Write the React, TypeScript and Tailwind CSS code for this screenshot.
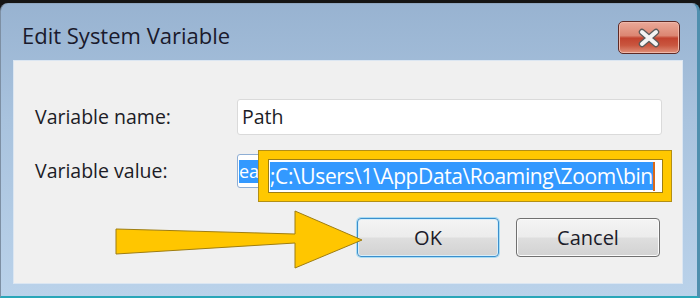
import React from "react";

const btnBg =
  "bg-[linear-gradient(to_bottom,#f4f4f4_0%,#ececec_48%,#dedede_52%,#d2d2d2_100%)]";

export default function App() {
  return (
    <div className="relative w-[700px] h-[298px] overflow-hidden bg-[#151515] pt-[3px] font-['Open_Sans',sans-serif]">
      <div className="h-full flex flex-col rounded-t-[8px] border-t border-l border-r-[3px] border-b-[2px] border-t-[#8fa6bf] border-l-[#7d8fa3] border-r-[#4f8fae] border-b-[#2aa6b8] bg-[linear-gradient(to_bottom,#98b3d1_0%,#a9c3de_40%,#bad2ea_100%)] pl-[12px] pr-[14px] pb-[12px]">
        {/* title bar */}
        <div className="h-[56px] flex items-start justify-between pt-[16px]">
          <div className="pl-[9px] text-[22px] leading-[30px] text-[#1a1a2c]">
            Edit System Variable
          </div>
          <div className="mt-[1px] mr-[3px] w-[62px] h-[33px] rounded-[5px] border border-[#5e2a26] bg-[linear-gradient(to_bottom,#eaa999_0%,#dc8672_44%,#c2432f_52%,#c9563f_75%,#df917b_100%)] shadow-[inset_0_0_0_1px_#f0b8aa] flex items-center justify-center">
            <svg width="24" height="20" viewBox="0 0 24 20">
              <path d="M5 4 L19 16 M19 4 L5 16" stroke="#5a5a5a" strokeWidth="6.5" strokeLinecap="round" />
              <path d="M5 4 L19 16 M19 4 L5 16" stroke="#f4f4f4" strokeWidth="4" strokeLinecap="round" />
            </svg>
          </div>
        </div>
        {/* client */}
        <div className="flex-1 bg-[#f0f0f0] border border-[#dbe6f2] pl-[21px] pt-[38px] text-[#1c1c26]">
          <div className="flex items-center h-[36px]">
            <div className="w-[202px] text-[19.5px] leading-[26px]">Variable name:</div>
            <div className="w-[425px] h-[36px] bg-white border border-[#dadada] rounded-[3px] flex items-center pl-[4px] text-[19.5px] leading-[26px]">
              Path
            </div>
          </div>
          <div className="flex items-center h-[34px] mt-[19px]">
            <div className="w-[202px] text-[19.5px] leading-[26px]">Variable value:</div>
            <div className="w-[425px] h-[34px] bg-white border border-[#8eaed4] rounded-[3px] flex items-center pl-[1px] overflow-hidden">
              <span className="bg-[#3399ff] text-white text-[18px] leading-[23px] pr-[20px]">ea</span>
            </div>
          </div>
          <div className="flex gap-[17px] ml-[322px] mt-[30px]">
            <div className={`w-[142px] h-[39px] rounded-[4px] border border-[#3c8fcc] shadow-[0_0_0_1px_#a9dcf3,inset_0_0_0_1px_#d6eefa] ${btnBg} flex items-center justify-center text-[20px] leading-[26px] text-[#1c1c2a]`}>
              OK
            </div>
            <div className={`w-[144px] h-[39px] rounded-[4px] border border-[#707070] shadow-[inset_0_0_0_1px_#fbfbfb] ${btnBg} flex items-center justify-center text-[20px] leading-[26px] text-[#1c1c2a]`}>
              Cancel
            </div>
          </div>
        </div>
      </div>

      {/* annotation: highlighted value box */}
      <div className="absolute left-[258px] top-[150px] w-[414px] h-[52px] bg-[#ffc800] border border-[#b38f14] pl-[9px] pt-[8px]">
        <div className="w-[395px] h-[34px] bg-white border border-[#9c7e16] flex items-center pl-[1px]">
          <span className="bg-[#3399ff] text-white text-[21px] leading-[28px] whitespace-nowrap tracking-[-0.4px]">
            ;C:\Users\1\AppData\Roaming\Zoom\bin
          </span>
          <span className="w-[2px] h-[29px] bg-[#d9691a]" />
        </div>
      </div>

      {/* annotation: arrow */}
      <svg className="absolute left-0 top-0" width="700" height="298" viewBox="0 0 700 298">
        <polygon
          points="116,229 295,234 295,211 362,240 295,268 295,243 116,254"
          fill="#ffc600"
          stroke="#9e7d12"
          strokeWidth="1"
          strokeLinejoin="miter"
        />
      </svg>
    </div>
  );
}
